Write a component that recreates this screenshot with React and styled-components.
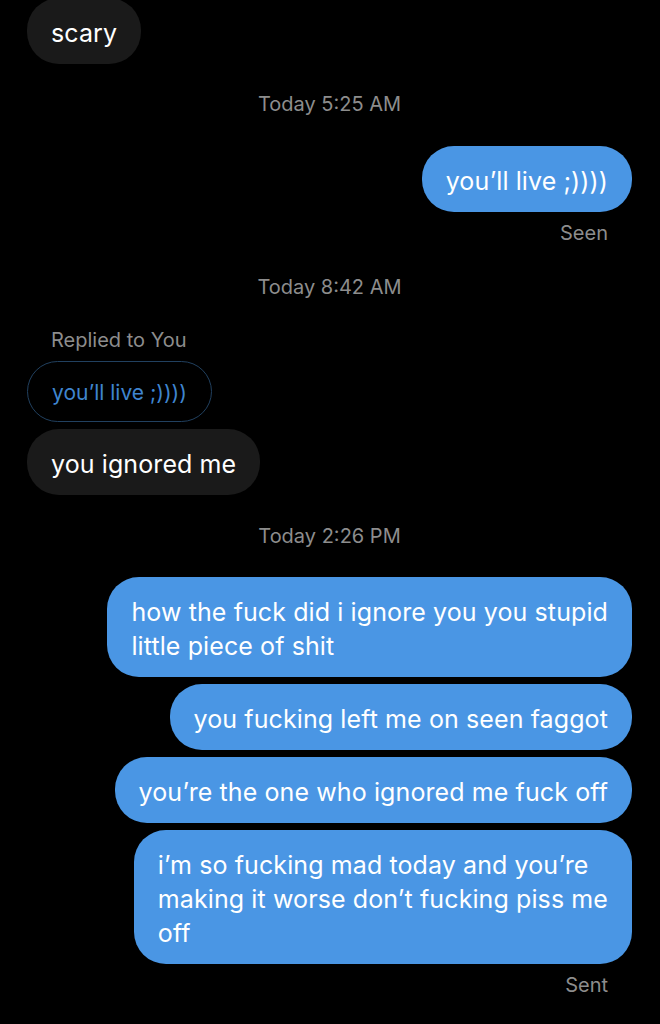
import React from "react";
import styled, { createGlobalStyle } from "styled-components";

const Global = createGlobalStyle`
  html, body {
    margin: 0;
    padding: 0;
    background: #000;
  }
  body {
    font-family: Inter, Roboto, "Liberation Sans", sans-serif;
    -webkit-font-smoothing: antialiased;
  }
`;

const Thread = styled.div`
  width: 660px;
  height: 1024px;
  overflow: hidden;
  display: flex;
  flex-direction: column;
  padding: 0 28px 0 27px;
  box-sizing: border-box;
  background: #000;
`;

const Group = styled.div`
  display: flex;
  flex-direction: column;
  align-items: ${(p) => (p.$mine ? "flex-end" : "flex-start")};
  gap: 7px;
  margin-top: ${(p) => p.$top || 0}px;
`;

const Bubble = styled.div`
  box-sizing: border-box;
  padding: 18px 24px 14px;
  border-radius: 32px;
  background: ${(p) => (p.$mine ? "#4a96e4" : "#1a1a1a")};
  color: #fff;
  font-size: 25px;
  line-height: 34px;
  letter-spacing: 0.1px;
  white-space: pre-line;
`;

const Stamp = styled.div`
  align-self: center;
  color: #8d8d8d;
  font-size: 20px;
  line-height: 24px;
  margin-top: ${(p) => p.$top || 0}px;
`;

const Status = styled.div`
  align-self: flex-end;
  margin-right: 24px;
  margin-top: 9px;
  color: #8d8d8d;
  font-size: 20px;
  line-height: 24px;
`;

const ReplyLabel = styled.div`
  color: #8d8d8d;
  font-size: 20px;
  line-height: 24px;
  margin-left: 24px;
  margin-top: 29px;
`;

const Quoted = styled.div`
  box-sizing: border-box;
  height: 61px;
  display: flex;
  align-items: center;
  padding: 2px 24px 0;
  margin-top: 9px;
  border: 1.5px solid #21405f;
  border-radius: 31px;
  color: #3f85cf;
  font-size: 21px;
`;

export default function App() {
  return (
    <>
      <Global />
      <Thread>
        <Group style={{ marginTop: -2 }}>
          <Bubble>scary</Bubble>
        </Group>

        <Stamp $top={28}>Today 5:25 AM</Stamp>

        <Group $mine $top={30}>
          <Bubble $mine>you’ll live ;))))</Bubble>
        </Group>
        <Status>Seen</Status>

        <Stamp $top={30}>Today 8:42 AM</Stamp>

        <ReplyLabel>Replied to You</ReplyLabel>
        <Group>
          <Quoted>you’ll live ;))))</Quoted>
          <Bubble>you ignored me</Bubble>
        </Group>

        <Stamp $top={29}>Today 2:26 PM</Stamp>

        <Group $mine $top={29}>
          <Bubble $mine>
            {"how the fuck did i ignore you you stupid\nlittle piece of shit"}
          </Bubble>
          <Bubble $mine>you fucking left me on seen faggot</Bubble>
          <Bubble $mine>you’re the one who ignored me fuck off</Bubble>
          <Bubble $mine>
            {"i’m so fucking mad today and you’re\nmaking it worse don’t fucking piss me\noff"}
          </Bubble>
        </Group>
        <Status>Sent</Status>
      </Thread>
    </>
  );
}
